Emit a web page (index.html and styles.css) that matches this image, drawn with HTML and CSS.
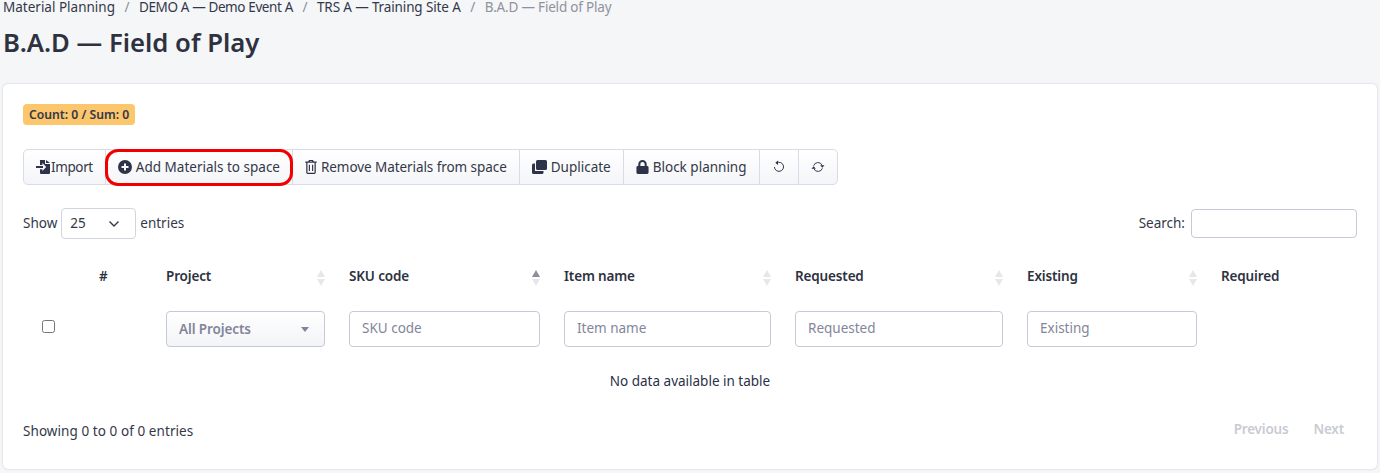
FILE: index.html
```html
<!DOCTYPE html>
<html lang="en">
<head>
<meta charset="utf-8">
<title>B.A.D — Field of Play</title>
<link rel="stylesheet" href="styles.css">
</head>
<body>
<header class="page-head">
  <nav class="crumbs">
    <a>Material Planning</a><i>/</i><a class="tight-3">DEMO A — Demo Event A</a><i>/</i><a class="tight-1">TRS A — Training Site A</a><i>/</i><span class="tight-2">B.A.D — Field of Play</span>
  </nav>
  <h1>B.A.D — Field of Play</h1>
</header>
<main class="card">
  <div><span class="badge">Count: 0 / Sum: 0</span></div>
  <div class="toolbar">
    <button class="btn btn-import"><svg class="ic" viewBox="0 0 14 14"><path d="M4 0h5v4h5v9a1 1 0 0 1-1 1H5a1 1 0 0 1-1-1V9.200h2.400V11l3.800-4-3.800-4v1.900H4V1a1 1 0 0 1 0-1zM10 0l4 3h-4zM0 5.900h7v2.200H0z"/></svg><span class="tight-3">Import</span></button>
    <button class="btn btn-add"><svg class="ic" viewBox="1 1 14 14"><path fill-rule="evenodd" d="M8 1a7 7 0 1 1 0 14A7 7 0 0 1 8 1zM7 4.500V7H4.500v2H7v2.500h2V9h2.500V7H9V4.500z"/></svg>Add Materials to space</button>
    <button class="btn btn-remove"><svg class="ic ic-trash" viewBox="2 .8 12 14.700"><path fill-rule="evenodd" d="M6 .8h4l1 1.700h3v1.300h-1V14a1.500 1.500 0 0 1-1.500 1.500h-7A1.500 1.500 0 0 1 3 14V3.800H2V2.500h3zM6.600 2.500h2.800l-.4-.6H7zM4.300 3.800V14c0 .1.100.2.200.2h7c.1 0 .2-.1.200-.2V3.800zM5.700 5.800h1.200v6.600H5.700zM9.100 5.800h1.200v6.600H9.100z"/></svg>Remove Materials from space</button>
    <button class="btn"><svg class="ic ic-dup" viewBox="0 0 15 14"><path d="M4 1.500A1.500 1.500 0 0 1 5.500 0h8A1.500 1.500 0 0 1 15 1.500v7a1.500 1.500 0 0 1-1.500 1.500h-8A1.500 1.500 0 0 1 4 8.500z"/><path d="M1.500 3.500H3v7.500h8.500v1.500a1.500 1.500 0 0 1-1.500 1.500H1.500A1.500 1.500 0 0 1 0 12.500V5a1.500 1.500 0 0 1 1.500-1.500z"/></svg>Duplicate</button>
    <button class="btn"><svg class="ic ic-lock" viewBox="1.500 .5 13 15"><path fill-rule="evenodd" d="M8 .5a4.500 4.500 0 0 1 4.500 4.500v2h.5A1.500 1.500 0 0 1 14.500 8.500v5.500a1.500 1.500 0 0 1-1.500 1.500H3A1.500 1.500 0 0 1 1.500 14V8.500A1.500 1.500 0 0 1 3 7h.5V5A4.500 4.500 0 0 1 8 .5zM5.700 7h4.600V5a2.300 2.300 0 0 0-4.600 0z"/></svg>Block planning</button>
    <button class="btn btn-icon"><svg class="ic-line" viewBox="0 0 16 16"><path d="M5.200 3.400A5.200 5.200 0 1 1 2.800 8" fill="none"/><path class="solid" d="M6.900 .6v5L3.800 3.100z"/></svg></button>
    <button class="btn btn-icon"><svg class="ic-line" viewBox="0 0 16 16"><path d="M3 6.500a5.200 5.200 0 0 1 9.700-.5M13 9.500a5.200 5.200 0 0 1-9.700.5" fill="none"/><path class="solid" d="M10.400 5.900h5L13 8.800zM.6 10.100h5L3 7.200z"/></svg></button>
  </div>
  <div class="table-controls">
    <label class="length">Show <span class="select">25<svg viewBox="0 0 12 8"><path d="M1.500 1.500 6 6l4.500-4.500" fill="none"/></svg></span> entries</label>
    <label class="search">Search: <input type="text" aria-label="Search"></label>
  </div>
  <table class="data">
    <colgroup><col class="c0"><col class="c1"><col class="c2"><col class="c3"><col class="c4"><col class="c5"><col class="c6"><col class="c7"></colgroup>
    <thead>
      <tr>
        <th></th>
        <th>#</th>
        <th><div class="th-in">Project<span class="sort"></span></div></th>
        <th><div class="th-in">SKU code<span class="sort asc"></span></div></th>
        <th><div class="th-in">Item name<span class="sort"></span></div></th>
        <th><div class="th-in">Requested<span class="sort"></span></div></th>
        <th><div class="th-in">Existing<span class="sort"></span></div></th>
        <th>Required</th>
      </tr>
    </thead>
    <tbody>
      <tr class="filters">
        <td class="check"><span class="box"></span></td>
        <td></td>
        <td><div class="proj">All Projects<span class="caret"></span></div></td>
        <td><input type="text" placeholder="SKU code"></td>
        <td><input type="text" placeholder="Item name"></td>
        <td><input type="text" placeholder="Requested"></td>
        <td><input type="text" placeholder="Existing"></td>
        <td></td>
      </tr>
      <tr><td class="empty" colspan="8">No data available in table</td></tr>
    </tbody>
  </table>
  <div class="table-foot">
    <span class="wide">Showing 0 to 0 of 0 entries</span>
    <div class="pager"><a>Previous</a><a>Next</a></div>
  </div>
</main>
</body>
</html>
```
FILE: styles.css
```css
* { box-sizing: border-box; }
html, body { height: 473px; overflow: hidden; }
body {
  margin: 0;
  padding: 0 3px;
  background: #f5f6f8;
  color: #2f3349;
  font: 13.500px/21px "Noto Sans", "Open Sans", sans-serif;
}
.page-head { height: 84px; }
.crumbs { display: flex; height: 15px; align-items: center; color: #333848; line-height: 15px; white-space: nowrap; }
.crumbs i { font-style: normal; color: #8a8d98; margin: 0 9.500px; }
.crumbs span { color: #8f929c; }
.tight-1 { letter-spacing: -.13px; }
.tight-2 { letter-spacing: -.19px; }
.tight-3 { letter-spacing: -.38px; }
.wide { letter-spacing: .07px; }
h1 { margin: 10px 0 0; font-size: 25.700px; line-height: 36px; font-weight: 600; color: #2e3240; }
.card {
  height: 385px;
  padding: 20px;
  background: #fff;
  border-radius: 5px;
  box-shadow: 0 0 2px rgba(60, 64, 90, .28);
}
.badge {
  display: inline-block;
  height: 21px;
  padding: 0 6px;
  border-radius: 4px;
  background: #fbc66c;
  color: #33384a;
  font-size: 12.200px;
  font-weight: 600;
  line-height: 21px;
  vertical-align: top;
}
.toolbar {
  display: inline-flex;
  margin-top: 24px;
  height: 36px;
  border: 1px solid #d9dce6;
  border-radius: 5px;
  background: linear-gradient(#fff, #f4f5f8);
  vertical-align: top;
}
.btn {
  display: flex;
  align-items: center;
  gap: 4px;
  height: 34px;
  padding: 0 12px;
  border: 0;
  border-left: 1px solid #d9dce6;
  background: none;
  color: #333848;
  font: inherit;
}
.btn:first-child { border-left: 0; }
.btn-import { gap: 1px; }
.btn-remove { letter-spacing: -.07px; }
.ic { width: 14px; height: 14px; fill: #2f3349; flex: none; }
.ic-trash { width: 12px; }
.ic-dup { width: 15px; }
.ic-lock { width: 13px; }
.ic-line { width: 14px; height: 14px; stroke: #2f3349; stroke-width: 1.100; flex: none; }
.ic-line .solid { fill: #2f3349; stroke: none; }
.btn-add { position: relative; }
.btn-add::after {
  content: "";
  position: absolute;
  inset: -1px -1px -2px -1px;
  border: 3px solid #f00000;
  border-radius: 13px;
}
.table-controls {
  display: flex;
  justify-content: space-between;
  align-items: center;
  height: 30px;
  margin-top: 23px;
}
.length { display: flex; align-items: center; gap: 4px; color: #333848; padding-top: 1px; }
.select {
  display: flex;
  align-items: center;
  justify-content: space-between;
  width: 75px;
  height: 31px;
  padding: 0 15px 0 8px;
  border: 1px solid #d3d5dd;
  border-radius: 4px;
}
.select svg { width: 12px; height: 8px; stroke: #333848; stroke-width: 1.400; }
.search { display: flex; align-items: center; gap: 6px; color: #333848; }
.search input { width: 166px; height: 29px; }
input {
  display: block;
  width: 100%;
  height: 36px;
  padding: 0 12px 2px;
  border: 1px solid #c8c9d6;
  border-radius: 4px;
  background: #fff;
  color: #333848;
  font: inherit;
}
input::placeholder { color: #82859a; opacity: 1; }
.data { width: 100%; margin-top: 8px; border-collapse: collapse; table-layout: fixed; }
.c0 { width: 64px; } .c1 { width: 67px; } .c2 { width: 183px; } .c3 { width: 215px; }
.c4 { width: 231px; } .c5 { width: 232px; } .c6 { width: 194px; }
th { height: 60px; padding: 0 12px; text-align: left; font-weight: 600; color: #2e3240; letter-spacing: -.15px; }
.th-in { display: flex; justify-content: space-between; align-items: center; }
.sort { display: flex; flex-direction: column; gap: 2px; margin-top: 3px; }
.sort::before, .sort::after { content: ""; width: 0; height: 0; border: 4px solid transparent; }
.sort::before { border-top-width: 0; border-bottom: 7px solid #e6e7ea; }
.sort::after { border-bottom-width: 0; border-top: 7px solid #e6e7ea; }
.sort.asc::before { border-bottom-color: #8c8e98; }
.filters td { height: 46px; padding: 5px 12px; }
.filters .check { padding-left: 19px; }
.box { display: block; width: 13px; height: 13px; border: 1px solid #767676; border-radius: 2.500px; background: #fff; margin-top: -6px; }
.proj {
  display: flex;
  align-items: center;
  justify-content: space-between;
  height: 36px;
  padding: 0 15px 0 12px;
  border: 1px solid #c8c9d6;
  border-radius: 4px;
  background: linear-gradient(#fff, #f3f4f7);
  color: #82859a;
  font-weight: 600;
  letter-spacing: -.1px;
}
.caret { width: 0; height: 0; border: 4px solid transparent; border-bottom-width: 0; border-top: 5px solid #82859a; }
.empty { height: 50px; padding: 8px 12px 0; text-align: center; color: #2b3048; }
.table-foot { display: flex; justify-content: space-between; align-items: center; margin-top: 14px; height: 30px; color: #333848; }
.pager { display: flex; gap: 25px; padding-right: 13px; font-weight: 600; color: #c9cbd3; margin-top: -4px; letter-spacing: -.2px; }
```
